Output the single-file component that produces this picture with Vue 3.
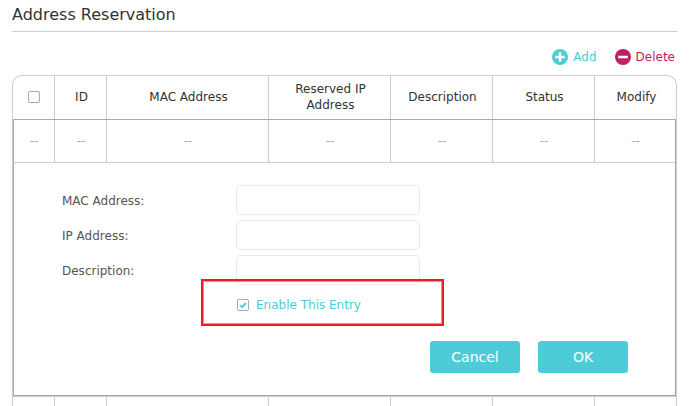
<script setup>
const headers = ['ID', 'MAC Address', 'Reserved IP Address', 'Description', 'Status', 'Modify']
const cells = ['--', '--', '--', '--', '--', '--', '--']
const fields = ['MAC Address:', 'IP Address:', 'Description:']
</script>

<template>
  <div class="page">
    <h2 class="title">Address Reservation</h2>
    <div class="toolbar">
      <span class="action add">
        <svg class="icon" viewBox="0 0 16 16"><circle cx="8" cy="8" r="8" fill="#4ecbd8" /><path d="M8 3.2v9.6M3.2 8h9.6" stroke="#fff" stroke-width="2.5" /></svg>
        Add
      </span>
      <span class="action del">
        <svg class="icon" viewBox="0 0 16 16"><circle cx="8" cy="8" r="8" fill="#c31d65" /><path d="M3.2 8h9.6" stroke="#fff" stroke-width="2.5" /></svg>
        Delete
      </span>
    </div>
    <div class="table">
      <div class="row head">
        <div class="cell"><span class="box"></span></div>
        <div v-for="h in headers" :key="h" class="cell">{{ h }}</div>
      </div>
      <div class="selected">
        <div class="row data">
          <div v-for="(c, i) in cells" :key="i" class="cell">{{ c }}</div>
        </div>
        <div class="editor">
          <div v-for="f in fields" :key="f" class="field">
            <label class="label">{{ f }}</label>
            <input class="input" type="text" />
          </div>
          <div class="check">
            <span class="box checked">
              <svg viewBox="0 0 12 12"><path d="M2.6 6.2 5 8.6 9.6 3.6" fill="none" stroke="#4ecbd8" stroke-width="2.4" /></svg>
            </span>
            <span>Enable This Entry</span>
          </div>
          <div class="buttons">
            <button class="btn">Cancel</button>
            <button class="btn">OK</button>
          </div>
        </div>
      </div>
      <div class="row tail">
        <div v-for="(c, i) in cells" :key="i" class="cell"></div>
      </div>
    </div>
    <div class="highlight"></div>
  </div>
</template>

<style>
html, body { margin: 0; background: #fff; overflow: hidden; }
</style>

<style scoped>
.page {
  position: relative;
  width: 665px;
  height: 406px;
  margin-left: 12px;
  font-family: "DejaVu Sans", Verdana, sans-serif;
  font-size: 12px;
  color: #333;
  overflow: hidden;
}
.title {
  margin: 0;
  height: 31px;
  font-size: 16px;
  line-height: 30px;
  font-weight: 400;
  border-bottom: 1px solid #ccc;
}
.toolbar {
  height: 43px;
  display: flex;
  justify-content: flex-end;
  align-items: center;
  gap: 18px;
  padding: 7px 2px 0 0;
  box-sizing: border-box;
}
.action { display: flex; align-items: center; gap: 5px; }
.add { color: #4ecbd8; }
.del { color: #c31d65; }
.icon { width: 16px; height: 16px; }
.table {
  height: 331px;
  border: 1px solid #ccc;
  border-bottom: 0;
  border-radius: 10px 10px 0 0;
  box-sizing: border-box;
}
.row {
  display: grid;
  grid-template-columns: 41px 52px 162px 122px 102px 102px 1fr;
}
.cell {
  display: flex;
  align-items: center;
  justify-content: center;
  text-align: center;
  border-left: 1px solid #ccc;
  box-sizing: border-box;
}
.cell:first-child { border-left: 0; }
.head { height: 43px; }
.head .cell { padding: 0 7px 2px 9px; line-height: 16px; }
.head .cell:first-child { padding: 0 0 2px; }
.selected {
  border: 1px solid #4ecbd8;
  height: 277px;
  box-sizing: border-box;
}
.data {
  height: 43px;
  margin-left: -1px;
  border-bottom: 1px solid #ccc;
  box-sizing: border-box;
  color: #aaa;
}
.data .cell { padding-left: 1px; }
.editor { padding: 22px 0 0 48px; }
.field {
  display: flex;
  align-items: center;
  height: 30px;
  margin-bottom: 5px;
}
.label { width: 174px; padding-top: 2px; color: #555; }
.input {
  width: 184px;
  height: 30px;
  padding: 0;
  box-sizing: border-box;
  border: 1px solid #e8e8e8;
  border-radius: 5px;
  outline: none;
}
.check {
  display: flex;
  align-items: center;
  gap: 7px;
  margin: 11px 0 0 175px;
  height: 18px;
  color: #4ecbd8;
}
.box {
  display: block;
  width: 12px;
  height: 12px;
  border: 1px solid #aaa;
  border-radius: 2px;
  box-sizing: border-box;
  background: #fff;
}
.checked svg { display: block; width: 10px; height: 10px; }
.buttons {
  display: flex;
  gap: 18px;
  margin: 27px 0 0 368px;
}
.btn {
  width: 90px;
  height: 32px;
  border: 0;
  border-radius: 3px;
  background: #4ecbd8;
  color: #fff;
  font: inherit;
  font-size: 14px;
}
.tail { height: 12px; border-top: 1px solid #ccc; }
.highlight {
  position: absolute;
  left: 189px;
  top: 279px;
  width: 243px;
  height: 47px;
  border: 2px solid #ed1c24;
  box-shadow: inset 0 0 0 1px rgba(237, 28, 36, 0.5);
  box-sizing: border-box;
}
</style>
